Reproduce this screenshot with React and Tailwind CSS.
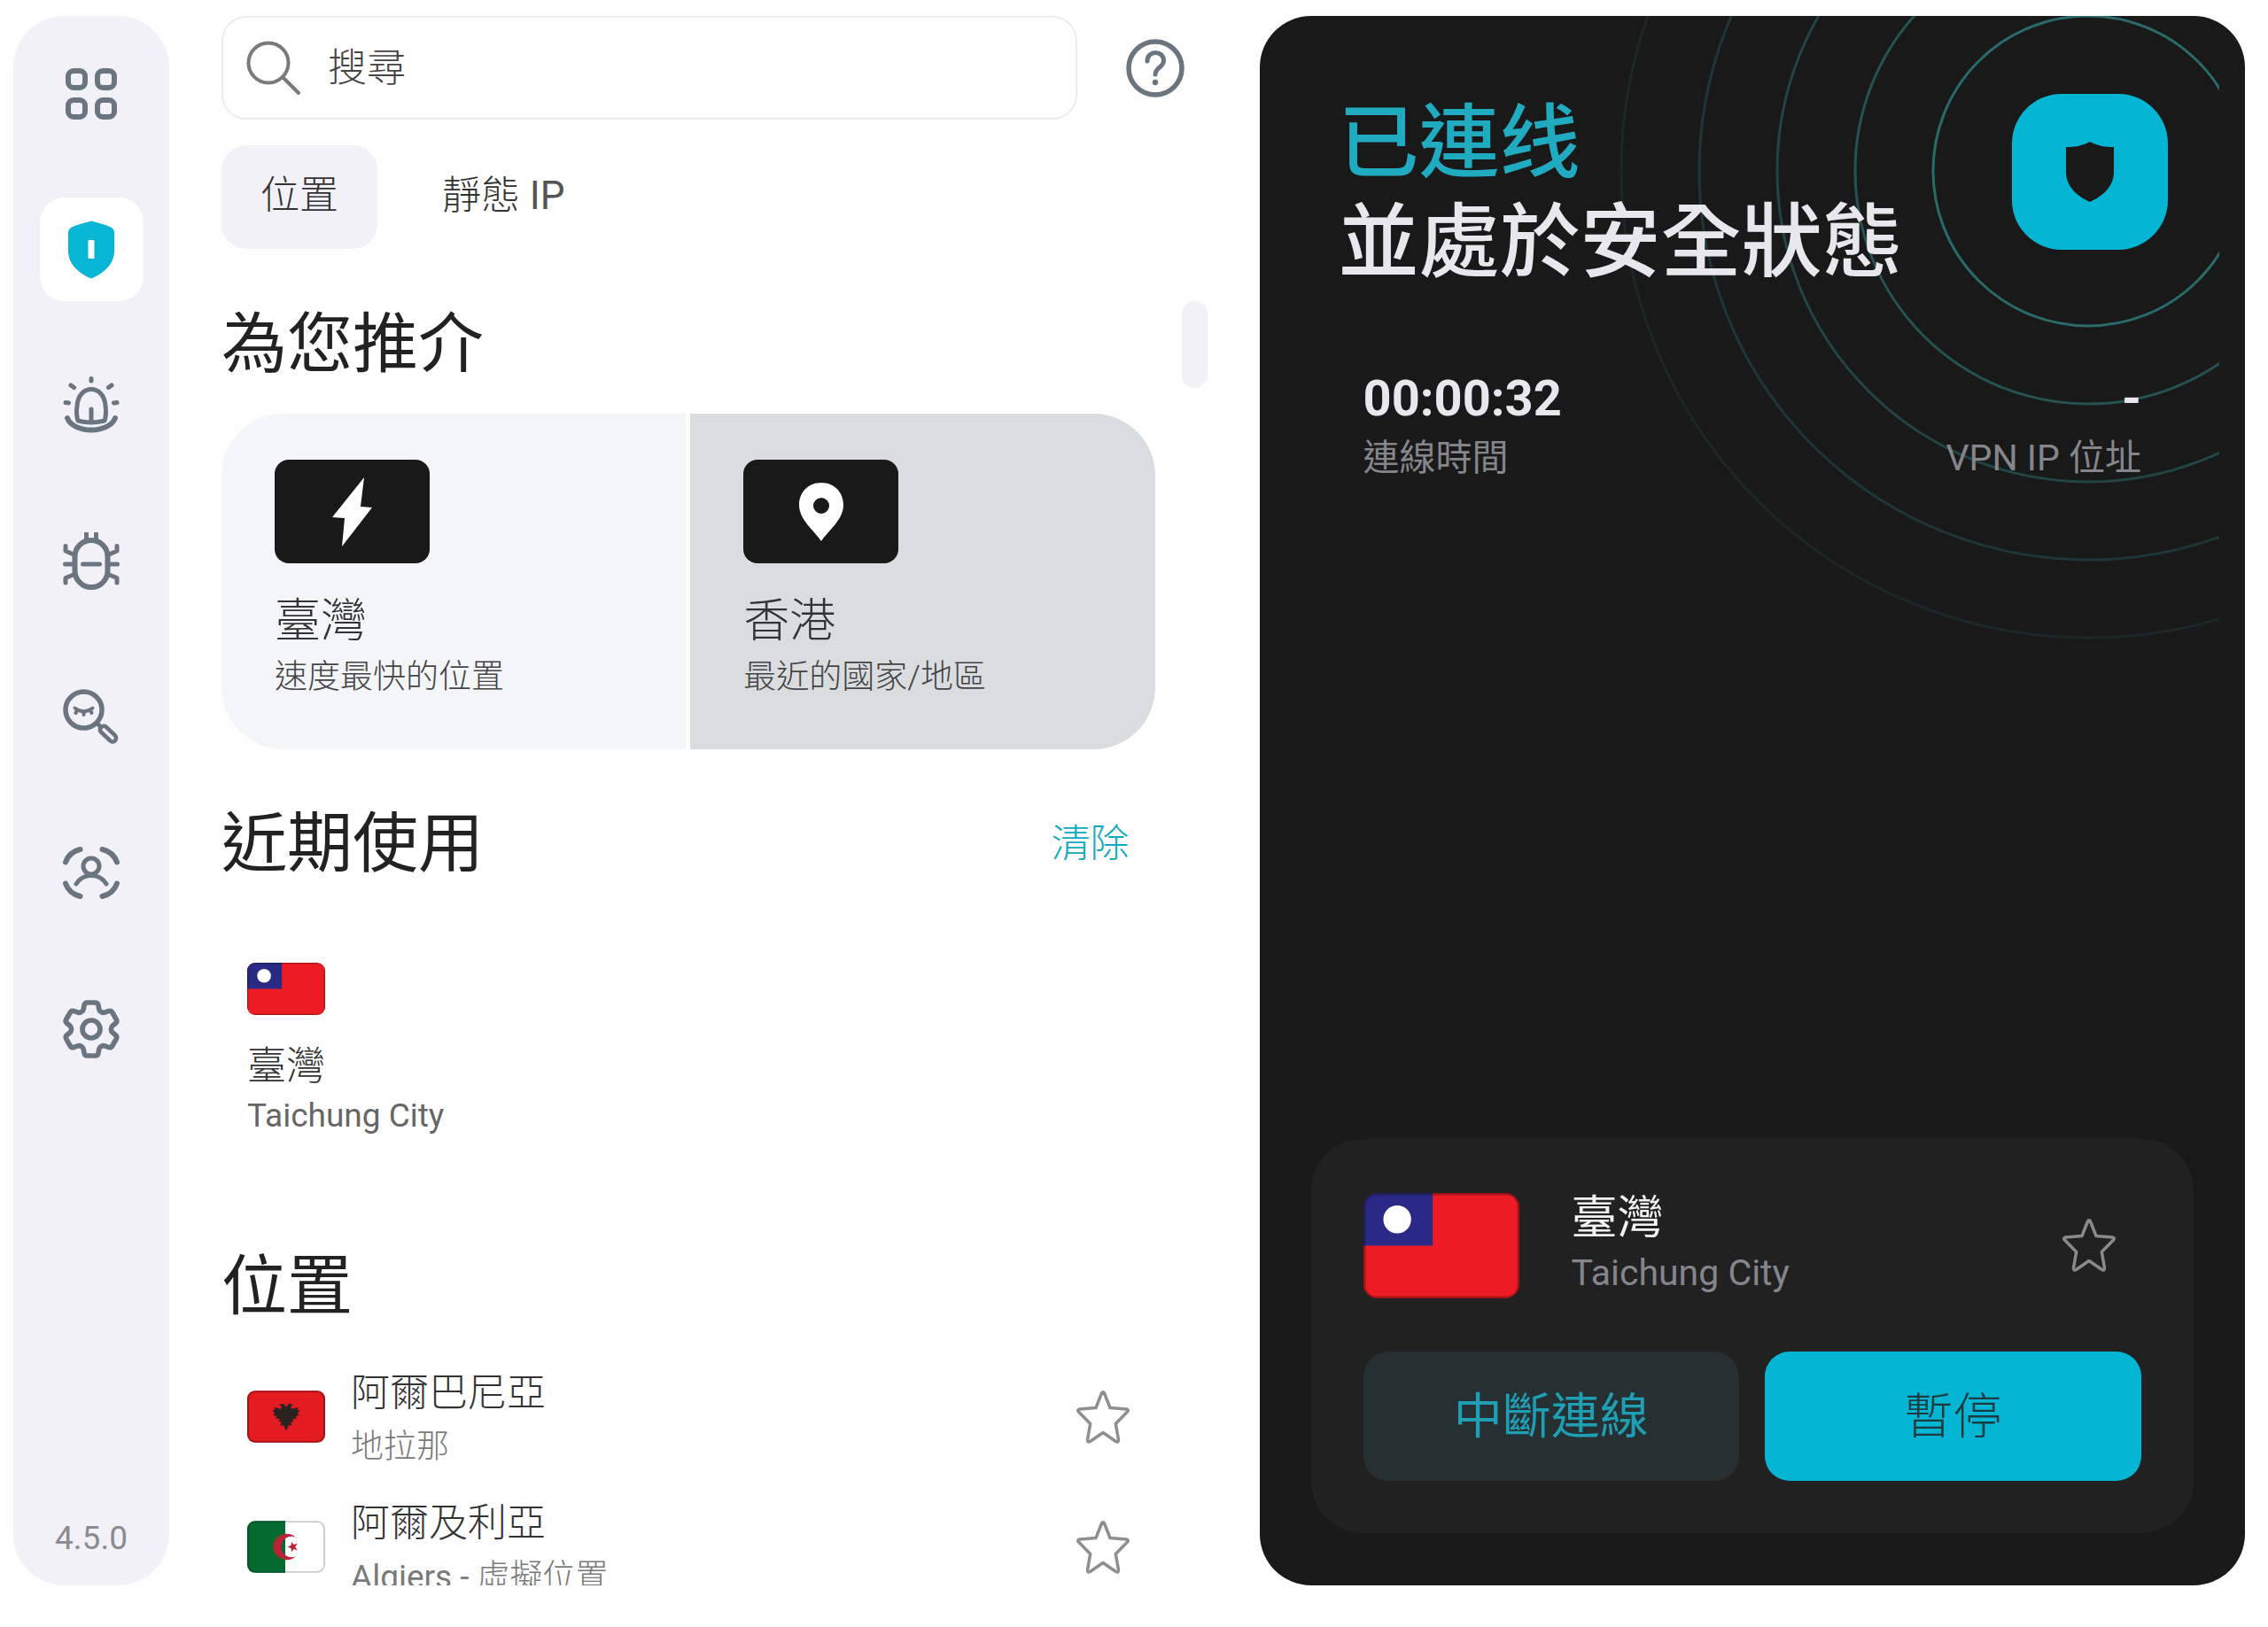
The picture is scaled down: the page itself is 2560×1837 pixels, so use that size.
import React from "react";
import { HiOutlineCog6Tooth } from "react-icons/hi2";

const navStroke = {
  fill: "none",
  stroke: "currentColor",
  strokeWidth: 5,
  strokeLinecap: "round",
  strokeLinejoin: "round",
};

function GridIcon() {
  return (
    <svg viewBox="0 0 66 66" className="size-[66px]" {...navStroke} strokeWidth={6}>
      <rect x="7" y="7" width="19" height="19" rx="6" />
      <rect x="40" y="7" width="19" height="19" rx="6" />
      <rect x="7" y="40" width="19" height="19" rx="6" />
      <rect x="40" y="40" width="19" height="19" rx="6" />
    </svg>
  );
}

function ShieldIcon() {
  return (
    <svg viewBox="0 0 66 66" className="size-[66px]">
      <path
        fill="#06b6d4"
        d="M33 0.500 C42 3 48 4.500 54 7 Q59 9 59 14 V34 C59 50 46 60 33 65.500 C20 60 7 50 7 34 V14 Q7 9 12 7 C18 4.500 24 3 33 0.500 Z"
      />
      <rect x="29.500" y="22" width="7" height="21" rx="1" fill="#ffffff" />
    </svg>
  );
}

function SirenIcon() {
  return (
    <svg viewBox="0 0 66 66" className="size-[66px]" {...navStroke}>
      <path d="M18 50 C16 44 16 40 17 33 C18 21 25 14.500 33 14.500 C41 14.500 48 21 49 33 C50 40 50 44 48 50 Q33 54 18 50 Z" />
      <path d="M33 37 V49" />
      <path d="M6 47 C13 65 53 65 60 47" strokeWidth="6" />
      <path d="M33 2.500 V5" />
      <path d="M10 10 L13.500 12.500" />
      <path d="M56 10 L52.500 12.500" />
      <path d="M4 29.500 L7.500 30" />
      <path d="M62 29.500 L58.500 30" />
    </svg>
  );
}

function BugIcon() {
  return (
    <svg viewBox="0 0 66 66" className="size-[66px]" {...navStroke}>
      <rect x="14.500" y="9" width="37" height="53" rx="18.500" strokeWidth="6" />
      <path d="M27.500 1.500 V8 M38.500 1.500 V8" />
      <path d="M23.500 36 H42.500" />
      <path d="M3.500 36 H14 M62.500 36 H52" />
      <path d="M4 15.500 V21 L14 25.500 M62 15.500 V21 L52 25.500" />
      <path d="M4 57 V51.500 L14 47.500 M62 57 V51.500 L52 47.500" />
    </svg>
  );
}

function TrackIcon() {
  return (
    <svg viewBox="0 0 66 66" className="size-[66px]" {...navStroke}>
      <circle cx="24.500" cy="24.500" r="20.500" strokeWidth="5.500" />
      <path d="M14.500 22.500 Q24.500 30 34.500 22.500" strokeWidth="4" />
      <path d="M24.500 27 V30 M17 25 L15.500 28 M32 25 L33.500 28" strokeWidth="4" />
      <path d="M39.500 39.500 L44 44" />
      <path d="M49.500 43.500 L60 53.500 C63.500 57 58 63 54.500 59.500 L44 49.500 C41 46 46 40.500 49.500 43.500 Z" strokeWidth="4.500" />
    </svg>
  );
}

function FaceIcon() {
  return (
    <svg viewBox="0 0 66 66" className="size-[66px]" {...navStroke}>
      <path d="M4 20.500 Q8 9 20.500 6 M62 20.500 Q58 9 45.500 6" strokeWidth="6" />
      <path d="M4 44.500 Q8 56 20.500 59 M62 44.500 Q58 56 45.500 59" strokeWidth="6" />
      <ellipse cx="33" cy="25" rx="9" ry="9" />
      <path d="M16 45 Q22 35.500 33 35.500 Q44 35.500 50 45" />
    </svg>
  );
}

function StarIcon() {
  return (
    <svg
      viewBox="0 0 60 60"
      className="size-[60px]"
      fill="none"
      stroke="currentColor"
      strokeWidth="3.500"
      strokeLinejoin="round"
    >
      <path d="M28.500 3 Q30 0.500 31.500 3 L38 19.500 L56.500 21 Q59.500 22 57.500 24 L44.300 37.500 L47.500 55.500 Q47.500 59 44.500 57.500 L30 47.500 L15.500 57.500 Q12.500 59 12.500 55.500 L15.700 37.500 L2.500 24 Q0.500 22 3.500 21 L22 19.500 Z" />
    </svg>
  );
}

function TaiwanFlag({ className }) {
  return (
    <svg viewBox="0 0 90 60" preserveAspectRatio="none" className={className} role="img" aria-label="臺灣">
      <rect width="90" height="60" fill="#ed1c24" />
      <rect width="40" height="30" fill="#2a2a86" />
      <circle cx="19.500" cy="15" r="8" fill="#ffffff" />
      <rect x="0.500" y="0.500" width="89" height="59" rx="7" fill="none" stroke="#000000" strokeOpacity="0.300" strokeWidth="1.500" />
    </svg>
  );
}

function AlbaniaFlag({ className }) {
  return (
    <svg viewBox="0 0 90 60" className={className} role="img" aria-label="阿爾巴尼亞">
      <rect width="90" height="60" fill="#e41b20" />
      <path
        fill="#2b2222"
        d="M45 19 L42 15 L37 16 L40 19 L38 21 L31 19 L32 22 L29 23 L32 26 L30 28 L34 30 L33 32 L38 33 L36 36 L40 36 L38 40 L42 40 L45 46 L48 40 L52 40 L50 36 L54 36 L52 33 L57 32 L56 30 L60 28 L58 26 L61 23 L58 22 L59 19 L52 21 L50 19 L53 16 L48 15 Z"
      />
      <rect x="1" y="1" width="88" height="58" rx="8" fill="none" stroke="#000000" strokeOpacity="0.300" strokeWidth="2" />
    </svg>
  );
}

function AlgeriaFlag({ className }) {
  return (
    <svg viewBox="0 0 90 60" className={className} role="img" aria-label="阿爾及利亞">
      <rect width="90" height="60" fill="#ffffff" />
      <rect width="44" height="60" fill="#046a30" />
      <path d="M56 19 A15 15 0 1 0 56 41 A12 12 0 1 1 56 19 Z" fill="#c2203a" />
      <path d="M29.500 30 A15 15 0 0 1 44 15 V18 A12 12 0 0 0 44 42 V45 A15 15 0 0 1 29.500 30 Z" fill="#8a3a2c" />
      <path d="M47 30 L51 28 L51 24 L54 27.500 L58 26 L55.500 30 L58 34 L54 32.500 L51 36 L51 32 Z" fill="#c2203a" />
      <rect x="1" y="1" width="88" height="58" rx="8" fill="none" stroke="#000000" strokeOpacity="0.200" strokeWidth="2" />
    </svg>
  );
}

const navItems = [
  { label: "總覽", icon: <GridIcon /> },
  { label: "VPN", icon: <ShieldIcon />, active: true },
  { label: "警示", icon: <SirenIcon /> },
  { label: "防毒", icon: <BugIcon /> },
  { label: "搜尋隱私", icon: <TrackIcon /> },
  { label: "身分", icon: <FaceIcon /> },
  { label: "設定", icon: <HiOutlineCog6Tooth className="size-20" strokeWidth={1.7} /> },
];

function Sidebar() {
  return (
    <aside className="flex flex-col items-center rounded-[58px] bg-[#f2f1f8] pt-[29px] pb-[25px]">
      <nav className="flex flex-col gap-[59px]">
        {navItems.map((item) => (
          <button
            key={item.label}
            type="button"
            aria-label={item.label}
            className={
              item.active
                ? "flex size-[117px] items-center justify-center rounded-[28px] bg-white"
                : "flex size-[117px] items-center justify-center rounded-[28px] text-[#6b7580]"
            }
          >
            {item.icon}
          </button>
        ))}
      </nav>
      <span className="mt-auto text-[37px] leading-[56px] text-[#8b8b8f]">4.5.0</span>
    </aside>
  );
}

function SearchRow() {
  return (
    <div className="flex items-center gap-[30px]">
      <label className="flex h-[117px] flex-1 items-center gap-[30px] rounded-[28px] border-2 border-[#ececee] pl-[26px]">
        <svg viewBox="0 0 62 62" className="size-[62px] shrink-0" fill="none" stroke="#7a7a7c" strokeWidth="4">
          <circle cx="25" cy="25" r="22.500" />
          <path d="M41 41 L59 59" strokeLinecap="round" />
        </svg>
        <input
          type="text"
          aria-label="搜尋"
          placeholder="搜尋"
          className="min-w-0 flex-1 bg-transparent text-[44px] font-light text-[#444444] outline-none placeholder:text-[#444444]"
        />
      </label>
      <button type="button" aria-label="說明" className="flex size-[117px] items-center justify-center text-[#6b7580]">
        <svg viewBox="0 0 66 66" className="size-[66px]" fill="none" stroke="currentColor" strokeLinecap="round">
          <circle cx="33" cy="33" r="30" strokeWidth="5.500" />
          <path d="M24 25 C24 12.500 42.500 12.500 42.500 24.500 C42.500 32 33 32 33 40" strokeWidth="5" />
          <circle cx="33" cy="49" r="3.200" fill="currentColor" stroke="none" />
        </svg>
      </button>
    </div>
  );
}

function Tabs() {
  return (
    <div className="mt-[29px] flex gap-[29px]" role="tablist">
      <button
        type="button"
        role="tab"
        aria-selected="true"
        className="h-[117px] rounded-[28px] bg-[#f2f1f8] px-11 pb-1 text-[44px] font-light text-[#333333]"
      >
        位置
      </button>
      <button type="button" role="tab" aria-selected="false" className="h-[117px] px-11 pb-1 text-[44px] font-light text-[#333333]">
        靜態 <span className="font-normal text-[#555555]">IP</span>
      </button>
    </div>
  );
}

function RecommendCard({ className, icon, title, note }) {
  return (
    <button type="button" className={className}>
      <span className="flex h-[117px] w-[175px] items-center justify-center rounded-[16px] bg-[#191919]">{icon}</span>
      <span className="mt-[31px] text-[52px] leading-[70px] font-light text-[#333333]">{title}</span>
      <span className="text-[37px] leading-[56px] font-light text-[#444444]">{note}</span>
    </button>
  );
}

function Recommended() {
  return (
    <div className="mt-[31px] grid grid-cols-2 gap-[5px] overflow-hidden rounded-[70px]">
      <RecommendCard
        className="flex flex-col items-start bg-[#f3f5f9] px-[60px] pt-[52px] pb-[53px] text-left"
        title="臺灣"
        note="速度最快的位置"
        icon={
          <svg viewBox="0 0 46 78" className="h-[78px] w-[46px]" fill="#ffffff">
            <path d="M36 0 L0 45 L14 46 L11 78 L45 34 L32 33 Z" />
          </svg>
        }
      />
      <RecommendCard
        className="flex flex-col items-start bg-[#dadde0] px-[60px] pt-[52px] pb-[53px] text-left"
        title="香港"
        note="最近的國家/地區"
        icon={
          <svg viewBox="0 0 52 66" className="h-[66px] w-[52px]" fill="#ffffff">
            <path
              fillRule="evenodd"
              d="M26 0 C11 0 1 11 1 25 C1 42 18 54 26 66 C34 54 51 42 51 25 C51 11 41 0 26 0 Z M26 17 A9 9 0 1 1 26 35 A9 9 0 1 1 26 17 Z"
            />
          </svg>
        }
      />
    </div>
  );
}

const locations = [
  { name: "阿爾巴尼亞", city: "地拉那", flag: <AlbaniaFlag className="h-[59px] w-[88px] shrink-0 rounded-[9px]" /> },
  {
    name: "阿爾及利亞",
    city: (
      <>
        <span className="font-normal">Algiers -</span> 虛擬位置
      </>
    ),
    flag: <AlgeriaFlag className="h-[59px] w-[88px] shrink-0 rounded-[9px]" />,
  },
];

function LocationList() {
  return (
    <ul className="mt-[26px]">
      {locations.map((loc) => (
        <li key={loc.name} className="flex h-[147px] items-center px-[29px]">
          {loc.flag}
          <div className="ml-[29px] flex-1 pt-2">
            <p className="text-[44px] leading-[60px] font-light text-[#333333]">{loc.name}</p>
            <p className="text-[37px] leading-[62px] font-light text-[#7a7a7a]">{loc.city}</p>
          </div>
          <button type="button" aria-label={"收藏 " + loc.name} className="text-[#8f8f91]">
            <StarIcon />
          </button>
        </li>
      ))}
    </ul>
  );
}

function LocationsPanel() {
  return (
    <main className="flex min-h-0 min-w-0 flex-col">
      <SearchRow />
      <Tabs />
      <div className="mt-[59px] flex min-h-0 flex-1 gap-[30px]">
        <div className="min-w-0 flex-1 overflow-hidden">
          <h2 className="pt-0.5 text-[74px] leading-[94px] text-[#222222]">為您推介</h2>
          <Recommended />
          <div className="mt-[60px] flex items-center justify-between pr-[29px]">
            <h2 className="text-[74px] leading-[94px] text-[#222222]">近期使用</h2>
            <button type="button" className="text-[44px] leading-[94px] font-light text-[#0fa9bf]">
              清除
            </button>
          </div>
          <button type="button" className="mt-[58px] flex flex-col items-start p-[29px] text-left">
            <TaiwanFlag className="h-[59px] w-[88px] rounded-[9px]" />
            <span className="mt-[29px] text-[44px] leading-[58px] font-light text-[#333333]">臺灣</span>
            <span className="text-[37px] leading-[54px] text-[#666666]">Taichung City</span>
          </button>
          <h2 className="mt-[90px] text-[74px] leading-[94px] text-[#222222]">位置</h2>
          <LocationList />
        </div>
        <div className="h-[98px] w-[29px] rounded-full bg-[#f2f1f8]" />
      </div>
    </main>
  );
}

const rings = [
  { r: 175, color: "#2a6a6b" },
  { r: 263, color: "#255353" },
  { r: 351, color: "#224546" },
  { r: 439, color: "#1f3638" },
  { r: 527, color: "#1c2728" },
];

function StatusPanel() {
  return (
    <section className="relative flex min-w-0 flex-col overflow-hidden rounded-[58px] bg-[#191919] px-[58px] pb-[59px]">
      <svg viewBox="0 0 680 710" className="absolute top-0 right-[29px] h-[710px] w-[680px]" fill="none" strokeWidth="3" aria-hidden="true">
        {rings.map((ring) => (
          <circle key={ring.r} cx="532" cy="175" r={ring.r} stroke={ring.color} />
        ))}
      </svg>
      <div className="relative flex items-start justify-between pt-[88px] pr-[29px] pl-[31px]">
        <h1 className="text-[91px] leading-[112px] font-medium text-[#e8e8ec]">
          <span className="block text-[#20abc1]">已連线</span>
          並處於安全狀態
        </h1>
        <button type="button" aria-label="VPN" className="flex size-44 shrink-0 items-center justify-center rounded-[56px] bg-[#04b6d4]">
          <svg viewBox="0 0 54 68" className="h-[68px] w-[54px]" fill="#191919">
            <path d="M27 0 C36 5 45 6 54 6 V34 C54 52 40 62 27 68 C14 62 0 52 0 34 V6 C9 6 18 5 27 0 Z" />
          </svg>
        </button>
      </div>
      <dl className="relative mt-[82px] flex justify-between px-[59px]">
        <div className="flex flex-col-reverse">
          <dt className="text-[41px] leading-[58px] text-[#85858c]">連線時間</dt>
          <dd className="text-[56px] leading-[76px] font-bold text-[#e8e8ec]">00:00:32</dd>
        </div>
        <div className="flex flex-col-reverse text-right">
          <dt className="text-[41px] leading-[58px] text-[#85858c]">VPN IP 位址</dt>
          <dd className="text-[56px] leading-[76px] font-bold text-[#e8e8ec]">-</dd>
        </div>
      </dl>
      <div className="relative mt-auto rounded-[58px] bg-[#212121] p-[59px]">
        <div className="flex items-center">
          <TaiwanFlag className="h-[119px] w-44 shrink-0 rounded-[16px]" />
          <div className="ml-[59px] flex-1">
            <p className="text-[52px] leading-[62px] text-[#f2f2f2]">臺灣</p>
            <p className="text-[41px] leading-[60px] text-[#85858d]">Taichung City</p>
          </div>
          <button type="button" aria-label="收藏" className="mr-[29px] text-[#8a8a8a]">
            <StarIcon />
          </button>
        </div>
        <div className="mt-[59px] grid grid-cols-2 gap-[29px]">
          <button type="button" className="h-[146px] rounded-[28px] bg-[#263032] text-[55px] text-[#1f9fb3]">
            中斷連線
          </button>
          <button type="button" className="h-[146px] rounded-[28px] bg-[#04b6d4] text-[55px] font-light text-[#1c3a40]">
            暫停
          </button>
        </div>
      </div>
    </section>
  );
}

export default function App() {
  return (
    <div className="grid h-screen grid-cols-[176px_minmax(0,1fr)_minmax(0,1fr)] grid-rows-[minmax(0,1fr)] gap-[59px] bg-[#fefefe] pt-[18px] pr-[26px] pb-[47px] pl-[15px] font-['Roboto','Noto_Sans_CJK_TC',sans-serif]">
      <Sidebar />
      <LocationsPanel />
      <StatusPanel />
    </div>
  );
}
